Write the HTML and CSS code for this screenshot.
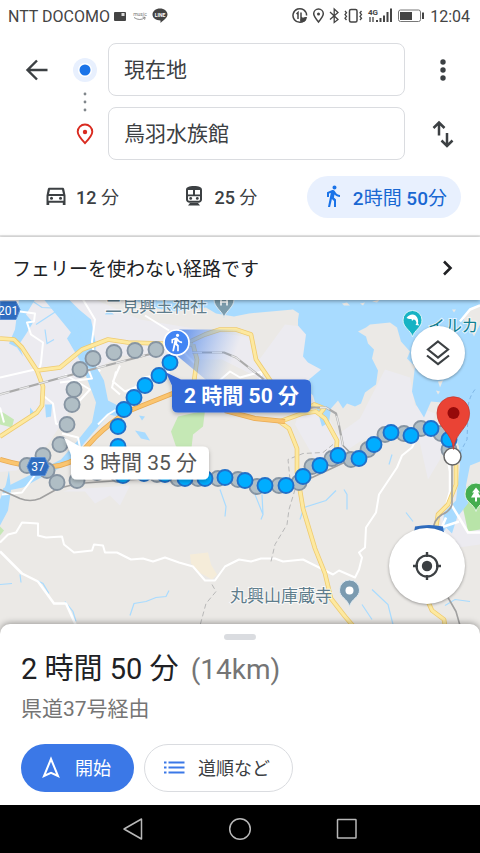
FILE: index.html
```html
<!DOCTYPE html>
<html lang="ja">
<head>
<meta charset="utf-8">
<meta name="viewport" content="width=device-width, initial-scale=1">
<title>現在地から鳥羽水族館</title>
<link rel="stylesheet" href="styles.css">
</head>
<body>
<div class="status">
  <span class="carrier">NTT DOCOMO</span>
  <svg class="status-left" viewBox="0 0 56 20" width="56" height="20" aria-hidden="true">
    <rect x="1" y="6" width="12" height="9" rx="1" fill="#444"/><rect x="8.500" y="7" width="3" height="3" fill="#ddd"/>
    <text x="27" y="10" class="tiny-music">music</text><path d="M21 11.500q6 4 11 0m-2.500-.4 2.700.2-.6 2.400" fill="none" stroke="#777" stroke-width=".8"/>
    <path d="M47 2.500c4.300 0 7.500 2.700 7.500 6.100 0 3-3.500 5.200-7 8.400v-2.500c-4.500 0-8-2.400-8-5.900 0-3.400 3.200-6.100 7.500-6.100z" fill="#444"/>
    <text x="47" y="10.500" class="tiny-line">LINE</text>
  </svg>
  <svg class="status-right" viewBox="0 0 134 20" width="134" height="20" aria-hidden="true">
    <g fill="none" stroke="#444" stroke-width="1.500">
      <path d="M13.500 13.200A6.800 6.800 0 1 1 14.600 9.500M6 13V6.500L4.500 8M9 6.500V13l1.500-1.500"/>
      <path d="M26.500 16c-3-3.600-4.800-6-4.800-8.200a4.800 4.800 0 0 1 9.600 0c0 2.200-1.800 4.600-4.800 8.200z"/>
      <path d="m38 6 8 7.500-3.800 3V3L46 6.500l-8 7" stroke-width="1.300"/>
      <rect x="57.500" y="3.500" width="7.500" height="12.500" rx="1.500"/>
      <path d="m53 5 1.500 1.800L53 8.600l1.500 1.800L53 12.200l1.500 1.800M69.500 5 68 6.800l1.500 1.800-1.500 1.800 1.500 1.800L68 14" stroke-width="1.300"/>
      <rect x="106.500" y="4" width="22" height="11.500" rx="2" stroke="#777" stroke-width="1"/>
    </g>
    <path d="M8 15.500c0-3 3-4.500 7-4.500-.5 4-3 6.500-7 4.500z" fill="#444"/>
    <circle cx="26.500" cy="8" r="1.500" fill="#444"/>
    <text x="76" y="9" class="tiny-4g">4G</text>
    <path d="M78 11v5M81 11v5" stroke="#444" stroke-width="1.300"/>
    <path d="M85 16v-2M88.500 16v-4M92 16v-6.500M95.500 16V6M99 16V2.500" stroke="#444" stroke-width="2"/>
    <rect x="108" y="6" width="12" height="8" fill="#444"/><path d="M131 6.500v6.500" stroke="#444" stroke-width="2"/>
  </svg>
  <time class="clock">12:04</time>
</div>

<header class="search">
  <form class="route">
    <button class="icon-btn" type="button" aria-label="戻る">
      <svg viewBox="0 0 24 24" width="24" height="24"><path d="M22.500 12H3M12 2.500 2.500 12l9.500 9.500" fill="none" stroke="#3c4043" stroke-width="2.400"/></svg>
    </button>
    <label class="mark" for="from" aria-label="出発地">
      <svg viewBox="0 0 24 24" width="24" height="24"><circle cx="12" cy="12" r="12" fill="#e8f0fe"/><circle cx="12" cy="12" r="7" fill="#fff"/><circle cx="12" cy="12" r="5.500" fill="#1a73e8"/></svg>
    </label>
    <input class="place" id="from" type="text" value="現在地">
    <button class="icon-btn" type="button" aria-label="その他">
      <svg viewBox="0 0 24 24" width="24" height="24" fill="#3c4043"><circle cx="12" cy="4" r="2.700"/><circle cx="12" cy="12" r="2.700"/><circle cx="12" cy="20" r="2.700"/></svg>
    </button>
    <span class="dots" aria-hidden="true"><svg viewBox="0 0 24 20" width="24" height="20" fill="#80868b"><circle cx="12" cy="2" r="1.400"/><circle cx="12" cy="10" r="1.400"/><circle cx="12" cy="18" r="1.400"/></svg></span>
    <label class="mark mark-to" for="to" aria-label="目的地">
      <svg viewBox="0 0 24 24" width="24" height="24"><path d="M12 21.200c-4.700-5-7.300-8-7.300-11.400a7.300 7.300 0 0 1 14.600 0c0 3.400-2.600 6.400-7.300 11.400z" fill="none" stroke="#d92b20" stroke-width="1.900"/><circle cx="12" cy="10" r="2.200" fill="#d92b20"/></svg>
    </label>
    <input class="place place-to" id="to" type="text" value="鳥羽水族館">
    <button class="icon-btn swap" type="button" aria-label="入れ替え">
      <svg viewBox="0 0 24 28" width="24" height="28"><path d="M8 15.500V3M2.500 8 8 2.500 13.500 8M16 13v12M10.500 20.500 16 26l5.500-5.500" fill="none" stroke="#3c4043" stroke-width="2.500"/></svg>
    </button>
  </form>
  <nav class="modes">
    <button class="mode" type="button">
      <svg viewBox="0 0 24 24" width="24" height="24" fill="#3c4043"><path d="M20.200 5c-.2-.7-.9-1.200-1.600-1.200H5.400c-.8 0-1.400.5-1.600 1.200L2.500 11.500V21h2.700v-2.300h13.600V21h2.700v-9.500zM6 5.800h12l1 4.200H5zM4.500 16.700V12h15v4.700z"/><circle cx="7.500" cy="14.300" r="1.500"/><circle cx="16.500" cy="14.300" r="1.500"/></svg>
      <span>12 <span class="kanji">分</span></span>
    </button>
    <button class="mode" type="button">
      <svg viewBox="0 0 24 24" width="24" height="24"><path d="M4 6c0-3 3-4 8-4s8 1 8 4v9.500c0 2-1.500 3.200-3.500 3.200h-9C5.500 18.700 4 17.500 4 15.500zM8 19h8l2 2.500H6z" fill="#3c4043"/><path d="M6 6h5v4.500H6zM13 6h5v4.500h-5zM6 12.300h12v2.900c0 1-.7 1.500-1.500 1.500h-9c-.8 0-1.500-.5-1.500-1.500z" fill="#fff"/><circle cx="8.700" cy="14.400" r="1.400" fill="#3c4043"/><circle cx="15.300" cy="14.400" r="1.400" fill="#3c4043"/></svg>
      <span>25 <span class="kanji">分</span></span>
    </button>
    <button class="mode mode-on" type="button" aria-pressed="true">
      <svg viewBox="0 0 24 24" width="24" height="24" fill="#1a73e8"><path d="M13.500 5.500c1.100 0 2-.9 2-2s-.9-2-2-2-2 .9-2 2 .9 2 2 2zM9.800 8.900 7 23h2.100l1.800-8 2.100 2v6h2v-7.500l-2.100-2 .6-3C14.800 12 16.800 13 19 13v-2c-1.900 0-3.500-1-4.300-2.400l-1-1.600c-.4-.6-1-1-1.700-1-.3 0-.5.1-.8.100L6 8.300V13h2V9.600l1.800-.7"/></svg>
      <span>2<span class="kanji">時間</span> 50<span class="kanji">分</span></span>
    </button>
  </nav>
</header>

<a class="ferry" href="#route">
  <span>フェリーを使わない経路です</span>
  <svg viewBox="0 0 16 16" width="16" height="16"><path d="m4 1.500 6.500 6.500L4 14.500" fill="none" stroke="#202124" stroke-width="2.600"/></svg>
</a>

<main class="map">
  <svg class="canvas" viewBox="0 300 480 341" preserveAspectRatio="xMidYMid slice" role="img" aria-label="地図">
    <defs>
      <linearGradient id="beam" gradientUnits="userSpaceOnUse" x1="178" y1="345" x2="232" y2="364"><stop offset="0" stop-color="#3f7be8" stop-opacity=".75"/><stop offset="1" stop-color="#6a9cf0" stop-opacity="0"/></linearGradient>
      <filter id="soft" x="-20%" y="-20%" width="140%" height="160%"><feDropShadow dx="0" dy="2" stdDeviation="2" flood-opacity=".25"/></filter>
    </defs>
    <rect y="300" width="480" height="341" fill="#ebe9e6"/>
    <g fill="#ecebf0">
      <path d="M0 300h95l45 20 60 10 50 8 12 42-40-20-40 0-60-4-40 20-15 40-20 30-30 25-57 5z"/>
      <path d="M285 325l25 3 5 30 10 25-15 20-50-12-5-25zM300 410l30 10 15 30-30 10-20-35zM385 370l25 8 5 28 20 8-5 20-50 0-20 8-15 10-10-15 25-18zM425 420l20 10-5 30-12 20-10-45zM440 515l40-5v35l-35 5zM70 490l60-4-10 20-10-10-15 8-10-12-22 0z"/>
    </g>
    <g fill="#c5e8b5">
      <path d="M178 417l27-6-2 16-10 8-2 18-15-6-5-15zM0 411l14 9-2 8-12-3z"/>
      <path d="M462 504l18-4v30l-12 2z" fill="#b8e4a8"/><path d="M0 527l4 4-4 5z"/>
    </g>
    <path d="M190 555l18-2 3 12 6 10-5 5-11-6-10-10z" fill="#f5ecd9"/>
    <g fill="#a8dbff">
      <path d="M112 300H480v162l-10 4-4 20 2 18-11 14-5 16-6-6-4 10 2-25 12-12 4-36-1-18-10-25-7-19-11-1-7 16-8-13-4-13 3-25-8-8 3-7-9-10-4-14-7-5-20 2-4 3-8 4 8 5 2 7 6 6-2 9 6 12-2 14-11 8-4 11-6 3-8-3-4 5-5-8-7 8-2 14-7 4-9-31-8-8 4-8 12-10-13-7-5-6 3-22-8-9 0-6 1-6-6-4-44 4-15 3-18-3-10-6-30 4-18-3-30-10-20-8-18-5z"/>
      <path d="M44 300h25l10 10 12 10 5 25-2 18 10 18 4 20 14 7 7 4-6 6-14-3-14 16-12 14-12 18-30 15-18 10-20 4v-3l30-15 28-14 15-17 16-20 4-20-9-24-6-16-14-24 4-6z"/>
      <path d="M19 300h16l-9 15 7 8-6 10-8 12 4 12-6-9-8-4 6-14zM108 310l6 5-9 0zM45 405l7 0-1 12-5 1zM30 408l5 6-5 2zM139 416l6 1-3 4zM135 431l10 2 5 8-9-2zM0 500l6-15 3-14 2 20-3 20-8 15z"/>
    </g>
    <g fill="#ebe9e6">
      <path d="M462 318l10-9 8-4v20l-6 12-6-12zM342 304l5-1 3 3-6 0zM360 304l5-1-2 3zM372 302l8-2-3 3zM452 310l4 0-2 3zM438 382l5-1-3 7zM436 391l4 1-2 3z"/>
    </g>
    <g fill="none" stroke="#a8dbff" stroke-width="1.200">
      <path d="M36 325l26-17 14 11 3 16 6 12M30 300l12 8 20 1M45 330l2 14 7-4M253 490l10 25-2 5M262 495l1 20M300 520l4-12 22-7 10-10M392 455l-3 10M406 513l7 9M347 510v-15l-3-5M220 490l6 17-1 10M130 616l4-12 12-2 10-4 10-1 3-6M0 585l12-1M372 590l16 15 5 20M362 605l10 15M20 575l1 8M37 581l6 3 6 10M65 602l8 10 3 10M445 606l10-6 15 2"/>
    </g>
    <g fill="none" stroke="#fff" stroke-width="2" stroke-linejoin="round">
      <path d="M83 300l12 20-3 22 3 20 5 10M20 312l15 2-1 8-7 1 4 12 12 8-2 20-3 14M145 316l24 15M0 378l35-8M88 369l4 10-32 4M116 372l-4 16 8 7M65 375l25 15-12 13M43 396l10 8 3 20 8 3M0 408l4 15M62 434l16 4 4 20M37 473l-15 20-20 2M98 425l10-10 10-6M175 344l20 20M216 384l14-12 10 6 22-6-2 8M268 405l8 4M120 366l-7 16 12 10 10-4 10-10 25-6"/>
      <path d="M0 543l8-8 8-2 6-10 16 1v12l8 2 16-1 2 8 10 8 18-2 2-6 9 1 2 7 12 0 14 7 12-1 10 3 12-4 14 5 14 4 12 14 10 0 10-14 14-7 12 2 10-3 14 0 8 3 20-2 20 10 10 5 6-4 16 7 4-8 3-12-3-5 6-5 1-20 10-15 3-18 10-15 8-12 5-12 10-8 5-10 4-8"/>
      <path d="M0 552l22 22 16 8 16 22 12 0 10 22M448 460l2 12 0 20-4 15-8 10M450 503l18 30 12 0M446 518l-5 12 14 12M441 528l18-6M460 322l10-12 10-4" stroke-width="2.500"/>
    </g>
    <path d="M333 445l-10 8-20 1-15 6 2 20 5 10-6 20-2 15-12 20-4 17M212 585l4 7-10 12-6 22" fill="none" stroke="#b8b8b8" stroke-width="1" stroke-dasharray="5 3"/>
    <g fill="none" stroke-linejoin="round">
      <path d="M0 339l14 1 8 8 15 23 6 16-1 19-5 7-37 24M37 371l23-3 22-18 26-10 20 3 65 2M190 342l15-7 15-5 16 0 15 5 5 25 15 22M193 345l4 15-3 22M278 421l11 8 8 20 0 24 6 36 12 40 10 25 6 25 14 18 12 14M280 422l22-8 14-2 9 7 12 22-1 15M300 415l14-10 10 4-4 5M456 465l0 20-8 20-10 10-3 20M428 602l4 9 12 9 3 18M425 430l20 8" stroke="#efcb70" stroke-width="4.600"/>
      <path d="M0 339l14 1 8 8 15 23 6 16-1 19-5 7-37 24M37 371l23-3 22-18 26-10 20 3 65 2M190 342l15-7 15-5 16 0 15 5 5 25 15 22M193 345l4 15-3 22M278 421l11 8 8 20 0 24 6 36 12 40 10 25 6 25 14 18 12 14M280 422l22-8 14-2 9 7 12 22-1 15M300 415l14-10 10 4-4 5M456 465l0 20-8 20-10 10-3 20M428 602l4 9 12 9 3 18" stroke="#fde9a0" stroke-width="3"/>
      <path d="M0 460q50 15 75 0l20-22q15-15 35-27l45-18M225 411l30 8 30 3" stroke="#e9aa52" stroke-width="5"/>
      <path d="M0 460q50 15 75 0l20-22q15-15 35-27l45-18M225 411l30 8 30 3" stroke="#fac570" stroke-width="3.500"/>
      <path d="M0 395l80-22 80-21M192 353h32l12 5 28 22M300 408h26l10 6 3 12 4 20" stroke="#aaa" stroke-width="2.200"/>
      <path d="M0 395l80-22 80-21M192 353h32l12 5 28 22M300 408h26l10 6 3 12 4 20" stroke="#e6e6e6" stroke-width="1.300" stroke-dasharray="10 10"/>
      <path d="M343 446l12 12-45 21-40 7M0 490l20 9q10 4 20 0l18-10 20-5 70-5M452 460v45q-2 7-10 10-10 6-9 20M448 598l8 14 4 14v15" stroke="#a0a0a0" stroke-width="1.600"/>
    </g>
    <path d="M475 390q-8 10-7 25l-1 25-8 15" fill="none" stroke="#7fb6e6" stroke-dasharray="4 3"/>
    <path d="M179 330h62l2 52h-35l-30-25z" fill="url(#beam)"/>

    <g fill="#b0bec5" stroke="#8795a3" stroke-width="1.900">
      <circle cx="156" cy="350" r="7.500"/><circle cx="135" cy="351" r="7.500"/><circle cx="114" cy="353" r="7.500"/><circle cx="93" cy="359" r="7.500"/><circle cx="80" cy="370" r="7.500"/><circle cx="74" cy="390" r="7.500"/><circle cx="72" cy="405" r="7.500"/><circle cx="67" cy="425" r="7.500"/><circle cx="60" cy="445" r="7.500"/><circle cx="43" cy="456" r="7.500"/><circle cx="27" cy="466" r="7.500"/><circle cx="47" cy="471" r="7.500"/><circle cx="57" cy="483" r="7.500"/><circle cx="77" cy="481" r="7.500"/><circle cx="97" cy="473" r="7.500"/><circle cx="118" cy="475" r="7.500"/><circle cx="157" cy="475" r="7.500"/><circle cx="178" cy="479" r="7.500"/><circle cx="198" cy="479" r="7.500"/><circle cx="218" cy="479" r="7.500"/><circle cx="238" cy="480" r="7.500"/><circle cx="257" cy="487" r="7.500"/><circle cx="279" cy="486" r="7.500"/><circle cx="299" cy="483" r="7.500"/><circle cx="312" cy="467" r="7.500"/><circle cx="332" cy="459" r="7.500"/><circle cx="351" cy="460" r="7.500"/><circle cx="368" cy="450" r="7.500"/><circle cx="385" cy="435" r="7.500"/><circle cx="404" cy="434" r="7.500"/><circle cx="421" cy="429" r="7.500"/><circle cx="441" cy="434" r="7.500"/><circle cx="449" cy="450" r="7.500"/>
    </g>
    <g fill="#00adff" stroke="#2170c8" stroke-width="1.900">
      <circle cx="170" cy="363" r="7.500"/><circle cx="159" cy="376" r="7.500"/><circle cx="145" cy="386" r="7.500"/><circle cx="134" cy="398" r="7.500"/><circle cx="124" cy="410" r="7.500"/><circle cx="118" cy="427" r="7.500"/><circle cx="118" cy="447" r="7.500"/><circle cx="123" cy="476" r="7.500"/><circle cx="144" cy="474" r="7.500"/><circle cx="165" cy="475" r="7.500"/><circle cx="185" cy="479" r="7.500"/><circle cx="205" cy="479" r="7.500"/><circle cx="225" cy="478" r="7.500"/><circle cx="245" cy="481" r="7.500"/><circle cx="265" cy="486" r="7.500"/><circle cx="286" cy="486" r="7.500"/><circle cx="303" cy="477" r="7.500"/><circle cx="320" cy="466" r="7.500"/><circle cx="338" cy="456" r="7.500"/><circle cx="359" cy="459" r="7.500"/><circle cx="374" cy="445" r="7.500"/><circle cx="391" cy="433" r="7.500"/><circle cx="411" cy="436" r="7.500"/><circle cx="431" cy="429" r="7.500"/><circle cx="449" cy="440" r="7.500"/>
    </g>

    <text class="poi" x="105" y="312">二見興玉神社</text>
    <path d="M224 318c-2-7-10-10-10-18v-2h20v2c0 8-8 11-10 18z" fill="#7b9bab" stroke="#dfe9f0"/><path d="M221 299v7M227 299v7M220 302.500h8" stroke="#fff" stroke-width="1.500"/>
    <text class="poi poi-teal" x="428" y="332">イルカ</text>
    <path d="M412.500 337.500c-1.500-7-9.500-9-9.500-17a9.500 9.500 0 0 1 19 0c0 8-8 10-9.500 17z" fill="#17b3c4" stroke="#d9f4f7"/><path d="M406.500 318.500c2-3 6-4.500 9-2.500 2.500 2 3 5 2.500 8l1.500 2-4-.5 1-2c-.5-2.500-1.500-3.500-3-3.500l-1.500 1.500-.5-2c-2 0-3 0-5-1z" fill="#fff"/>
    <text class="poi" x="230" y="602">丸興山庫蔵寺</text>
    <path d="M349.500 607c-2-8-10-9-10-16.500a10 10 0 0 1 20 0c0 7.500-8 8.500-10 16.500z" fill="#7b9bb0" stroke="#dfe9f0"/><circle cx="349.500" cy="591" r="4" fill="#fff"/>
    <path d="M476 512c-2-8-11-9-11-17.500a11 11 0 0 1 22 0c0 8-9 9.500-11 17.500z" fill="#45ad4f" stroke="#e1f3e1"/><path d="m476 488 4 5h-2l3 5h-4v4h-2v-4h-4l3-5h-2z" fill="#fff"/>
    <path d="M0 302h16l4 8-4 10H0z" fill="#2f6dc0" stroke="#5b8fd4"/><text class="shield" x="8" y="315">201</text>
    <path d="M31 458h14l4 9-4 9H31l-4-9z" fill="#2f6dc0" stroke="#5b8fd4"/><text class="shield" x="38" y="471.500">37</text>
    <path d="M414 533l1-6q14-3 28 0l1 6z" fill="#2f6dc0"/>

    <circle cx="176.500" cy="343" r="12.500" fill="#4285f4" stroke="#fff" stroke-width="1.700"/>
    <g transform="translate(166.500 333) scale(.82)" fill="#fff"><path d="M13.500 5.500c1.100 0 2-.9 2-2s-.9-2-2-2-2 .9-2 2 .9 2 2 2zM9.800 8.900 7 23h2.100l1.800-8 2.100 2v6h2v-7.500l-2.100-2 .6-3C14.800 12 16.800 13 19 13v-2c-1.900 0-3.500-1-4.300-2.400l-1-1.600c-.4-.6-1-1-1.700-1-.3 0-.5.1-.8.100L6 8.300V13h2V9.600l1.800-.7"/></g>

    <g filter="url(#soft)"><path d="M166 373l15 7h124q6 0 6 6v21q0 6-6 6H178q-6 0-6-6v-21z" fill="#3367d6"/></g>
    <text class="tip tip-on" x="241.500" y="403">2 時間 50 分</text>
    <g filter="url(#soft)"><path d="M64 438l16 9h123q6 0 6 6v21q0 6-6 6H77q-6 0-6-6v-19z" fill="#fff"/></g>
    <text class="tip" x="140" y="470">3 時間 35 分</text>

    <circle cx="452.500" cy="457" r="8.500" fill="#fff" stroke="#666" stroke-width="1.500"/>
    <path d="M453.500 450c-1.500-18-16.500-21-16.500-36.500a16.300 16.300 0 0 1 32.600 0c0 15.500-14.600 18.500-16.100 36.500z" fill="#ea4335" stroke="#c5352a" stroke-width=".7"/><circle cx="453.500" cy="413.500" r="6" fill="#960a0a"/>
  </svg>
  <button class="fab fab-layers" type="button" aria-label="レイヤ">
    <svg viewBox="0 0 28 28" width="28" height="28" fill="none" stroke="#3c4043" stroke-width="2.200"><path d="m14 2.500 10 8-10 8-10-8z"/><path d="m3 16.500 11 8.500 11-8.500"/></svg>
  </button>
  <button class="fab fab-locate" type="button" aria-label="現在地を表示">
    <svg viewBox="0 0 32 32" width="32" height="32"><circle cx="16" cy="16" r="10.500" fill="none" stroke="#3c4043" stroke-width="2.200"/><circle cx="16" cy="16" r="5.200" fill="#3c4043"/><path d="M16 2v5M16 25v5M2 16h5M25 16h5" stroke="#3c4043" stroke-width="2.400"/></svg>
  </button>
</main>

<section class="sheet" id="route">
  <div class="handle"></div>
  <h1 class="duration">2 時間 50 分 <span class="distance">(14km)</span></h1>
  <p class="via">県道37号経由</p>
  <div class="actions">
    <button class="pill pill-start" type="button">
      <svg viewBox="0 0 24 24" width="24" height="24"><path d="M12 4 5 21l7-3.200L19 21z" fill="none" stroke="#fff" stroke-width="2"/></svg>
      <span>開始</span>
    </button>
    <button class="pill pill-steps" type="button">
      <svg viewBox="0 0 24 24" width="24" height="24"><path d="M2 7.500h2.500M2 12.500h2.500M2 17.500h2.500M6.500 7.500h16M6.500 12.500h16M6.500 17.500h16" stroke="#3b78e7" stroke-width="2"/></svg>
      <span>道順など</span>
    </button>
  </div>
</section>

<nav class="system">
  <button class="sys" type="button" aria-label="戻る"><svg viewBox="0 0 24 24" width="24" height="24"><path d="M20.500 2v20L3 12z" fill="none" stroke="#b8b8b8" stroke-width="1.500" stroke-linejoin="round"/></svg></button>
  <button class="sys" type="button" aria-label="ホーム"><svg viewBox="0 0 24 24" width="24" height="24"><circle cx="12" cy="12" r="10.300" fill="none" stroke="#b8b8b8" stroke-width="1.500"/></svg></button>
  <button class="sys" type="button" aria-label="履歴"><svg viewBox="0 0 24 24" width="24" height="24"><rect x="2.500" y="2.500" width="18.500" height="18.500" rx=".5" fill="none" stroke="#b8b8b8" stroke-width="1.500"/></svg></button>
</nav>
</body>
</html>
```

FILE: styles.css
```css
* { box-sizing: border-box; }

body {
  margin: 0;
  min-height: 100vh;
  display: flex;
  flex-direction: column;
  background: #fff;
  color: #3c4043;
  font-family: Roboto, "Noto Sans CJK JP", sans-serif;
}

button {
  margin: 0;
  padding: 0;
  border: 0;
  background: none;
  color: inherit;
  font: inherit;
  cursor: pointer;
}

svg { display: block; flex: none; }

/* Status bar */
.status {
  display: flex;
  align-items: center;
  height: 34px;
  padding: 0 10px 2px 8px;
  color: #444;
  font-size: 16px;
}
.status-left { margin-left: 3px; }
.status-right { margin-left: auto; }
.clock { margin-left: 4px; }
.tiny-music { font-size: 5px; fill: #777; text-anchor: middle; }
.tiny-line { font-size: 5px; font-weight: 700; fill: #fff; text-anchor: middle; }
.tiny-4g { font-size: 8px; font-weight: 700; fill: #444; }

/* Search header */
.search { border-bottom: 2px solid #e8e8e8; padding: 9px 0 17px; }

.route {
  display: grid;
  grid-template-columns: 73px 35px 1fr 75px;
  grid-template-rows: 53px 11px 53px;
  align-items: center;
}
.icon-btn { display: flex; justify-content: center; }
.mark, .dots { grid-column: 2; }
.mark-to { grid-row: 3; }
.dots { grid-row: 2; display: flex; align-items: center; height: 11px; }
.place {
  width: 100%;
  height: 53px;
  padding: 0 15px 4px;
  border: 1px solid #dadce0;
  border-radius: 8px;
  background: #fff;
  color: #3c4043;
  font-family: inherit;
  font-size: 21px;
}
.place-to { grid-row: 3; grid-column: 3; }
.swap { grid-row: 3; grid-column: 4; }

.modes {
  display: flex;
  justify-content: space-between;
  padding: 16px 19px 0 30px;
}
.mode {
  display: flex;
  align-items: center;
  gap: 8px;
  height: 42px;
  padding: 0 14px 2px;
  border-radius: 21px;
  font-size: 18px;
  font-weight: 500;
}
.kanji { font-weight: 400; }
.mode-on { background: #e8f0fe; color: #1967d2; font-size: 19px; }

.ferry {
  position: relative;
  z-index: 1;
  display: flex;
  align-items: center;
  justify-content: space-between;
  height: 63px;
  padding: 0 24px 2px 12px;
  background: #fff;
  box-shadow: 0 1px 4px rgba(0, 0, 0, .4);
  color: #202124;
  font-size: 19px;
  text-decoration: none;
}

/* Map */
.map {
  position: relative;
  flex: 1;
  min-height: 340px;
  overflow: hidden;
}
.canvas { position: absolute; inset: 0; width: 100%; height: 100%; }
.poi {
  font-size: 17px;
  fill: #5f7d8c;
  stroke: #fff;
  stroke-width: 2px;
  stroke-opacity: .7;
  paint-order: stroke;
}
.poi-teal { fill: #128091; }
.shield { font-size: 12px; fill: #fff; text-anchor: middle; }
.tip { font-size: 21px; fill: #555; text-anchor: middle; }
.tip-on { fill: #fff; font-weight: 700; }

.fab {
  position: absolute;
  right: 15px;
  display: flex;
  align-items: center;
  justify-content: center;
  border-radius: 50%;
  background: #fff;
  box-shadow: 0 1px 3px rgba(0, 0, 0, .35);
}
.fab-layers { top: 26px; width: 54px; height: 54px; }
.fab-locate { bottom: 36px; width: 76px; height: 76px; }

/* Route sheet */
.sheet {
  position: relative;
  margin-top: -16px;
  padding: 10px 21px 13px;
  border-radius: 10px 10px 0 0;
  background: #fff;
  box-shadow: 0 -1px 6px rgba(0, 0, 0, .35);
}
.handle {
  width: 32px;
  height: 6px;
  margin: 0 auto;
  border-radius: 3px;
  background: #dadce0;
}
.duration {
  margin: 9px 0 0;
  color: #202124;
  font-size: 29px;
  font-weight: 400;
  line-height: 40px;
}
.distance { margin-left: 5px; color: #757575; font-size: 28px; }
.via {
  margin: 3px 0 0;
  color: #757575;
  font-size: 21px;
  line-height: 32px;
}
.actions { display: flex; gap: 10px; margin-top: 19px; }
.pill {
  display: flex;
  align-items: center;
  gap: 12px;
  height: 48px;
  padding-bottom: 2px;
  border-radius: 24px;
  font-size: 18px;
}
.pill-start { padding-left: 18px; padding-right: 23px; background: #3b78e7; color: #fff; }
.pill-steps { padding-left: 17px; padding-right: 22px; border: 1px solid #dadce0; }

/* System navigation */
.system {
  display: flex;
  align-items: center;
  justify-content: center;
  gap: 83px;
  height: 48px;
  background: #000;
}
```
